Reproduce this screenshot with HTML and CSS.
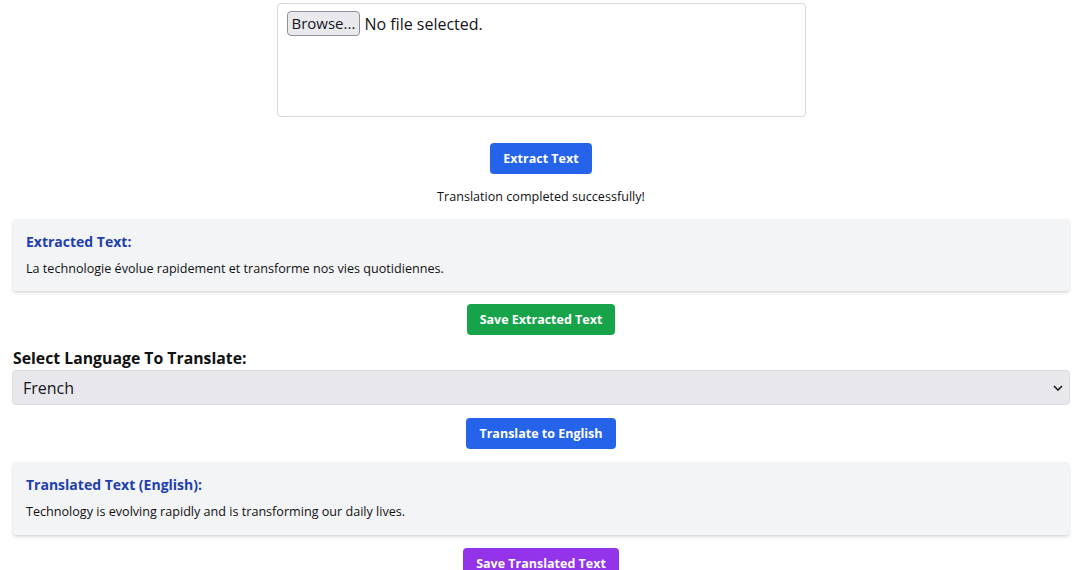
FILE: index.html
```html
<!DOCTYPE html>
<html lang="en">
  <head>
    <meta charset="UTF-8" />
    <meta name="viewport" content="width=device-width, initial-scale=1.0" />
    <title>Image Text Translator</title>
    <link rel="stylesheet" href="styles.css">
  </head>
  <body>
    <div class="page">
      <div class="upload-box">
        <label class="file-picker">
          <span class="browse-btn">Browse...</span>
          <span class="file-name">No file selected.</span>
        </label>
      </div>

      <div class="actions">
        <button class="btn btn-blue">Extract Text</button>
      </div>

      <p class="status">Translation completed successfully!</p>

      <div class="result-card">
        <h3>Extracted Text:</h3>
        <p>La technologie évolue rapidement et transforme nos vies quotidiennes.</p>
      </div>

      <div class="actions">
        <button class="btn btn-green">Save Extracted Text</button>
      </div>

      <label class="lang-label" for="lang">Select Language To Translate:</label>
      <div class="select-wrap">
        <select id="lang" class="lang-select">
          <option>French</option>
          <option>Spanish</option>
          <option>German</option>
        </select>
        <svg class="chevron" width="10" height="6" viewBox="0 0 10 6">
          <path d="M1 1l4 4 4-4" fill="none" stroke="#1a1a1a" stroke-width="1.6"/>
        </svg>
      </div>

      <div class="actions">
        <button class="btn btn-blue">Translate to English</button>
      </div>

      <div class="result-card translated">
        <h3>Translated Text (English):</h3>
        <p>Technology is evolving rapidly and is transforming our daily lives.</p>
      </div>

      <div class="actions">
        <button class="btn btn-purple">Save Translated Text</button>
      </div>
    </div>
  </body>
</html>
```

FILE: styles.css
```css
html {
  font-family: "Open Sans", sans-serif;
}

body {
  margin: 0;
  background-color: #fff;
  color: #111;
}

.page {
  padding: 3px 10px 0 12px;
}

.upload-box {
  width: 529px;
  height: 114px;
  box-sizing: border-box;
  margin: 0 auto;
  padding: 7px 9px;
  border: 1px solid #d8d8dc;
  border-radius: 4px;
}

.file-picker {
  display: flex;
  align-items: center;
  gap: 4px;
  font-size: 16px;
  color: #15141a;
}

.browse-btn {
  padding: 0 4px;
  height: 23px;
  font-size: 15px;
  line-height: 22px;
  background-color: #e9e9ed;
  border: 1px solid #8f8f9d;
  border-radius: 4px;
}

.actions {
  display: flex;
  justify-content: center;
}

.btn {
  font-family: "Open Sans", sans-serif;
  font-size: 12.5px;
  font-weight: 700;
  line-height: 19px;
  color: #fff;
  border: none;
  border-radius: 4px;
  padding: 6px 13px;
  cursor: pointer;
}

.btn-blue {
  background-color: #2563eb;
}

.btn-green {
  background-color: #16a34a;
}

.btn-purple {
  background-color: #9333ea;
}

.upload-box + .actions {
  margin-top: 26px;
}

.status {
  margin: 14px 0 13px;
  text-align: center;
  font-size: 12.6px;
  line-height: 18px;
}

.result-card {
  margin: 0 1px;
  padding: 13px 13px;
  background-color: #f3f4f6;
  border-radius: 3px;
  box-shadow: 0 2px 4px rgba(0, 0, 0, 0.12), 0 1px 2px rgba(0, 0, 0, 0.06);
}

.result-card h3 {
  margin: 0 0 8px;
  font-size: 14px;
  line-height: 20px;
  color: #1e40af;
}

.result-card p {
  margin: 0;
  font-size: 12.6px;
  line-height: 18px;
}

.translated {
  padding-bottom: 14px;
}

.result-card + .actions {
  margin-top: 13px;
}

.actions + .result-card {
  margin-top: 13px;
}

.lang-label {
  display: block;
  margin: 12px 0 1px 1px;
  font-size: 15.8px;
  line-height: 22px;
  font-weight: 700;
}

.select-wrap {
  position: relative;
  margin-bottom: 13px;
}

.lang-select {
  display: block;
  width: 100%;
  height: 35px;
  padding: 0 10px;
  font-family: "Open Sans", sans-serif;
  font-size: 16px;
  color: #15141a;
  background-color: #e8e8ec;
  border: 1px solid #dcdce0;
  border-radius: 4px;
  appearance: none;
  -webkit-appearance: none;
}

.chevron {
  position: absolute;
  right: 7px;
  top: 15px;
  pointer-events: none;
}
```
